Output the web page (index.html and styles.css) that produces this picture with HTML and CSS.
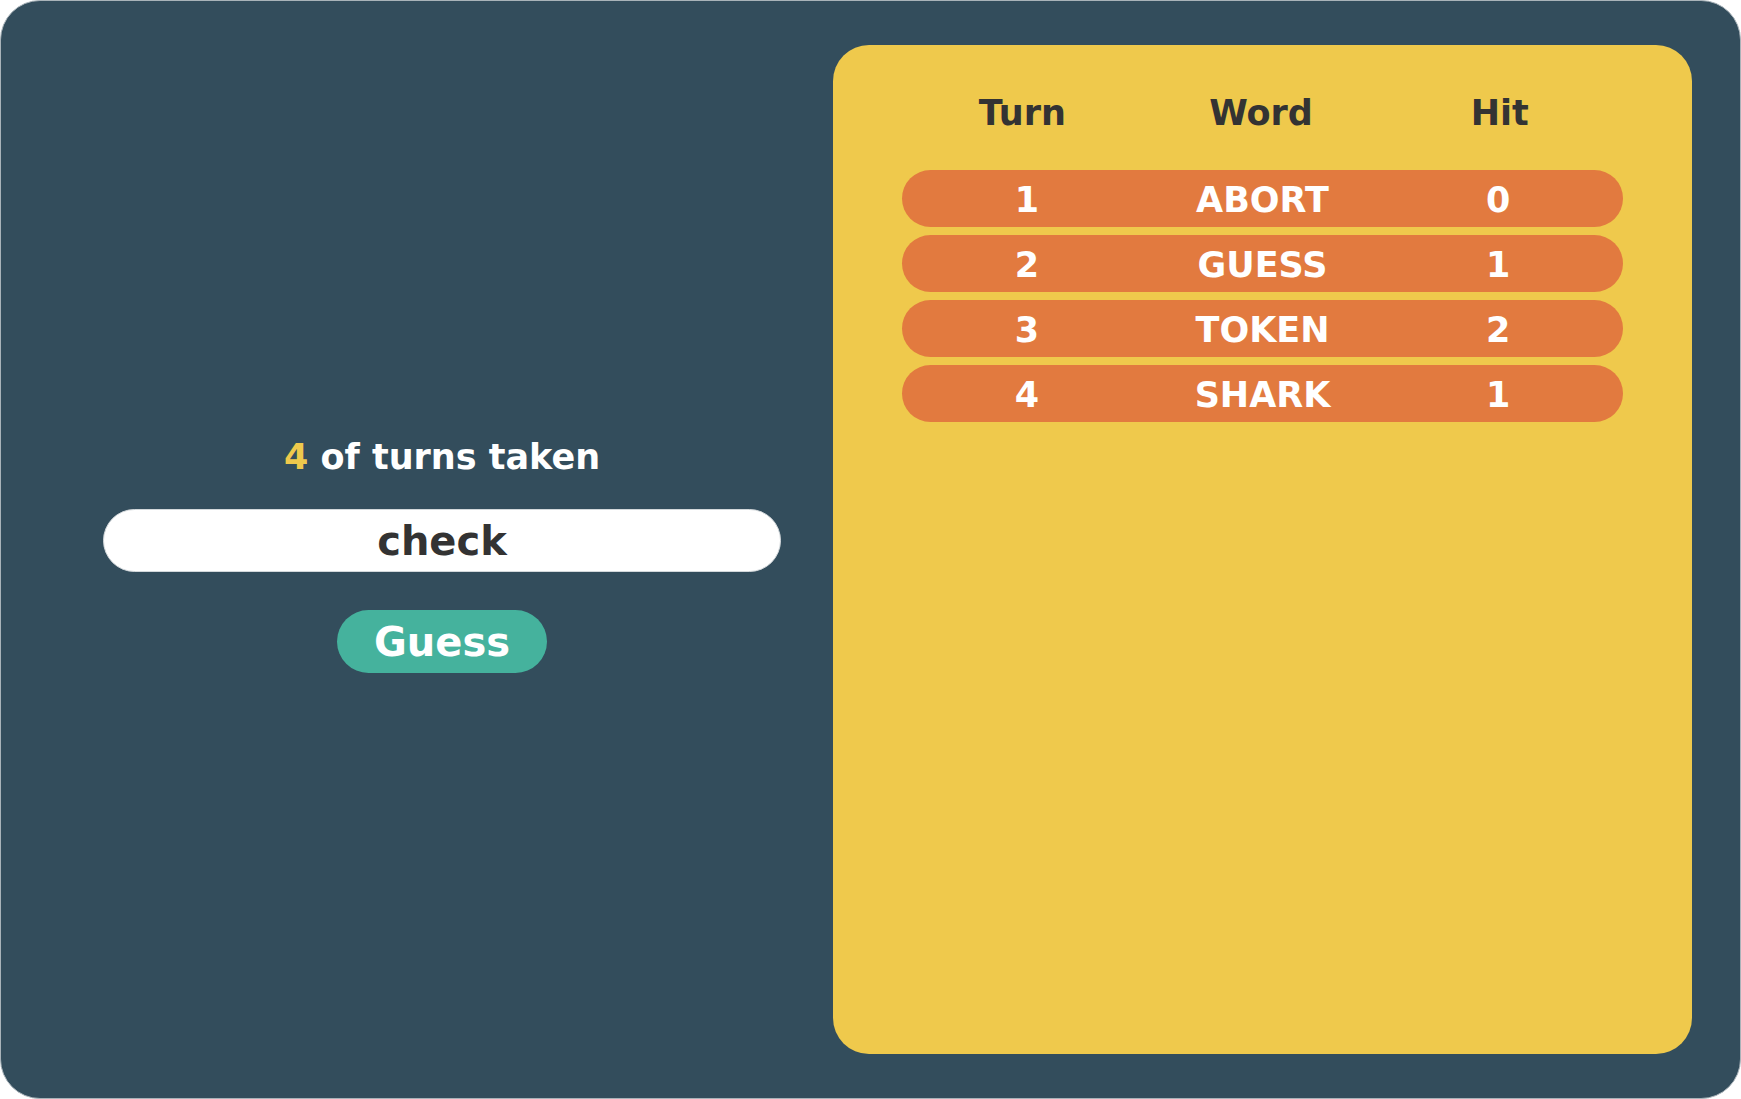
FILE: index.html
```html
<!DOCTYPE html>
<html lang="en">
<head>
<meta charset="utf-8">
<title>Word Guess</title>
<link rel="stylesheet" href="styles.css">
</head>
<body>
<div class="app">
  <section class="play">
    <p class="turns"><span class="count">4</span> of turns taken</p>
    <input class="guess-input" type="text" value="check">
    <button class="guess-btn" type="button">Guess</button>
  </section>
  <section class="board">
    <div class="board-head">
      <span>Turn</span><span>Word</span><span>Hit</span>
    </div>
    <ol class="rows">
      <li class="row"><span>1</span><span>ABORT</span><span>0</span></li>
      <li class="row"><span>2</span><span>GUESS</span><span>1</span></li>
      <li class="row"><span>3</span><span>TOKEN</span><span>2</span></li>
      <li class="row"><span>4</span><span>SHARK</span><span>1</span></li>
    </ol>
  </section>
</div>
</body>
</html>
```

FILE: styles.css
```css
html, body {
  margin: 0;
  padding: 0;
  background: #ffffff;
}

body {
  font-family: "DejaVu Sans", Verdana, sans-serif;
  font-weight: bold;
}

.app {
  box-sizing: border-box;
  width: 1741px;
  height: 1099px;
  border: 1px solid #a9b3b9;
  border-radius: 40px;
  background: #334d5c;
  padding: 44px 48px 44px 50px;
  display: grid;
  grid-template-columns: 1fr 859px;
}

.play {
  display: flex;
  flex-direction: column;
  align-items: center;
  justify-content: center;
  padding-top: 11px;
}

.turns {
  margin: 0;
  font-size: 35px;
  line-height: 41px;
  color: #ffffff;
}

.count {
  color: #efc94c;
}

.guess-input {
  box-sizing: border-box;
  margin: 31px 0 0;
  width: 678px;
  height: 63px;
  padding: 0;
  border: 1px solid #d3d8db;
  border-radius: 32px;
  background: #ffffff;
  color: #333333;
  font-family: "DejaVu Sans", Verdana, sans-serif;
  font-weight: bold;
  font-size: 40px;
  text-align: center;
  outline: none;
}

.guess-btn {
  margin: 38px 0 0;
  width: 210px;
  height: 63px;
  padding: 0;
  border: 0;
  border-radius: 32px;
  background: #45b29d;
  color: #ffffff;
  font-family: "DejaVu Sans", Verdana, sans-serif;
  font-weight: bold;
  font-size: 40px;
}

.board {
  background: #efc94c;
  border-radius: 36px;
  padding: 48px 69px 0;
}

.board-head {
  display: grid;
  grid-template-columns: repeat(3, 1fr);
  padding: 0 4px 0 1px;
  font-size: 35px;
  line-height: 41px;
  color: #333333;
  text-align: center;
}

.rows {
  list-style: none;
  margin: 36px 0 0;
  padding: 0;
  display: flex;
  flex-direction: column;
  gap: 8px;
}

.row {
  box-sizing: border-box;
  display: grid;
  grid-template-columns: repeat(3, 1fr);
  align-items: center;
  height: 57px;
  padding: 4px 7px 0;
  background: #e27a3f;
  border-radius: 29px;
  color: #ffffff;
  font-size: 35px;
  line-height: 41px;
  text-align: center;
}
```
